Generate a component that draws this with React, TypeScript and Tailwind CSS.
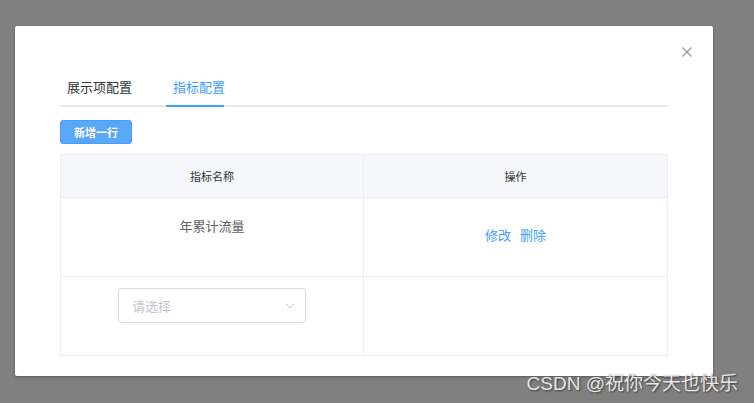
import React from 'react';

const font = { fontFamily: '"Noto Sans CJK SC", "Noto Sans", sans-serif' };

function CloseIcon() {
    return (
        <svg width="10" height="10" viewBox="0 0 10 10" fill="none">
            <path d="M0.5 0.5L9.5 9.5M9.5 0.5L0.5 9.5" stroke="#909399" strokeWidth="1.1" />
        </svg>
    );
}

function ChevronDown() {
    return (
        <svg width="10" height="6" viewBox="0 0 10 6" fill="none">
            <path d="M1 1L5 5L9 1" stroke="#c0c4cc" strokeWidth="1" />
        </svg>
    );
}

export default function App() {
    return (
        <div className="relative w-[754px] h-[403px] overflow-hidden bg-[#808080] pt-[26px] pl-[15px]" style={font}>
            {/* dialog */}
            <div className="w-[698px] h-[350px] bg-white rounded-[2px] shadow-[0_1px_3px_rgba(0,0,0,0.3)]">
                <div className="flex justify-end h-[41px] pt-[21px] pr-[21px]">
                    <CloseIcon />
                </div>

                <div className="px-[45px]">
                    {/* tabs */}
                    <div className="flex border-b-2 border-[#e4e7ed]">
                        <div className="w-[106px] pl-[7px] h-[40px] leading-[40px] -mb-[2px] border-b-2 border-transparent whitespace-nowrap text-[13px] text-[#303133]">
                            展示项配置
                        </div>
                        <div className="w-[58px] pl-[7px] h-[40px] leading-[40px] -mb-[2px] border-b-2 border-[#409eff] whitespace-nowrap text-[13px] text-[#409eff]">
                            指标配置
                        </div>
                    </div>

                    <button className="mt-[13px] flex items-center justify-center w-[72px] h-[24px] rounded-[3px] border border-[#409eff] bg-[#5aa7f7] text-white text-[11px] font-bold">
                        新增一行
                    </button>

                    {/* table */}
                    <div className="mt-[10px] border border-[#ebeef5]">
                        <div className="grid grid-cols-[303px_1fr] h-[43px] bg-[#f5f7fa] border-b border-[#ebeef5] text-[11px] text-[#303133]">
                            <div className="flex items-center justify-center border-r border-[#ebeef5]">指标名称</div>
                            <div className="flex items-center justify-center">操作</div>
                        </div>
                        <div className="grid grid-cols-[303px_1fr] h-[79px] border-b border-[#ebeef5] text-[13px]">
                            <div className="border-r border-[#ebeef5] pt-[18px] leading-[20px] text-center text-[#606266]">
                                年累计流量
                            </div>
                            <div className="pt-[27px] leading-[20px] flex justify-center gap-[9px] text-[#409eff]">
                                <span>修改</span>
                                <span>删除</span>
                            </div>
                        </div>
                        <div className="grid grid-cols-[303px_1fr] h-[78px]">
                            <div className="border-r border-[#ebeef5] pt-[11px] flex justify-center">
                                <div className="flex items-center justify-between w-[188px] h-[35px] rounded-[4px] border border-[#dcdfe6] pl-[13px] pr-[10px]">
                                    <span className="text-[13px] text-[#c0c4cc]">请选择</span>
                                    <ChevronDown />
                                </div>
                            </div>
                            <div />
                        </div>
                    </div>
                </div>
            </div>

            {/* watermark */}
            <div
                className="absolute right-[16px] top-[372px] text-[19px] leading-[24px] text-[#e6e6e6] [text-shadow:1px_1px_2px_#3a3a3a]"
                style={{ fontFamily: '"Liberation Sans", "Noto Sans CJK SC", sans-serif' }}
            >
                CSDN @祝你今天也快乐
            </div>
        </div>
    );
}
